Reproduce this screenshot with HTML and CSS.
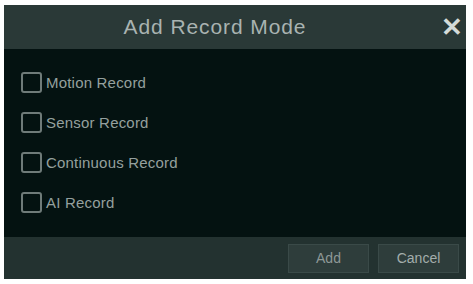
FILE: index.html
```html
<!DOCTYPE html>
<html lang="en">
    <head>
        <meta charset="UTF-8" />
        <title>Add Record Mode</title>
        <link rel="stylesheet" href="styles.css">
    </head>
    <body>
        <!-- 녹화모드 추가 팝업 -->
        <div class="dlg">
            <div class="dlgHead">
                <span class="ttl">Add Record Mode</span>
                <span class="close">&#x2715;</span>
            </div>
            <ul class="dlgBody">
                <li><span class="chk"></span>Motion Record</li>
                <li><span class="chk"></span>Sensor Record</li>
                <li><span class="chk"></span>Continuous Record</li>
                <li><span class="chk"></span>AI Record</li>
            </ul>
            <div class="dlgFoot">
                <button class="btn add">Add</button>
                <button class="btn">Cancel</button>
            </div>
        </div>
    </body>
</html>
```

FILE: styles.css
```css
body {
    margin: 0;
    background-color: #fff;
    font-family: "Liberation Sans", Arial, sans-serif;
}

/* 팝업 박스 */
.dlg {
    width: 462px;
    height: 274px;
    margin: 5px 0 0 4px;
    display: flex;
    flex-direction: column;
    background-color: #041211;
}

/* 상단 제목줄 */
.dlgHead {
    height: 44px;
    display: flex;
    align-items: center;
    justify-content: center;
    position: relative;
    background-color: #2a3937;
}
.ttl {
    font-size: 21px;
    letter-spacing: 0.9px;
    color: #a9b3b1;
    margin-left: -40px;
}
.close {
    position: absolute;
    top: 7px;
    right: 3px;
    font-size: 26px;
    font-weight: bold;
    color: #d3dbd9;
}

/* 체크박스 목록 */
.dlgBody {
    flex: 1;
    list-style: none;
    margin: 0;
    padding: 23px 0 0 17px;
    display: flex;
    flex-direction: column;
    gap: 20px;
}
.dlgBody li {
    height: 20px;
    display: flex;
    align-items: center;
    font-size: 15px;
    letter-spacing: 0.2px;
    color: #95a09e;
}
.chk {
    width: 17px;
    height: 17px;
    border: 2px solid #6f7b79;
    border-radius: 3px;
    margin-right: 4px;
}

/* 하단 버튼줄 */
.dlgFoot {
    height: 42px;
    display: flex;
    align-items: center;
    justify-content: flex-end;
    gap: 9px;
    padding-right: 7px;
    background-color: #233230;
}
.btn {
    width: 81px;
    height: 29px;
    border: 1px solid #3a4a48;
    background-color: #2e3d3b;
    color: #a3adab;
    font-family: inherit;
    font-size: 14px;
}
.add {
    color: #8d9896;
}
```
